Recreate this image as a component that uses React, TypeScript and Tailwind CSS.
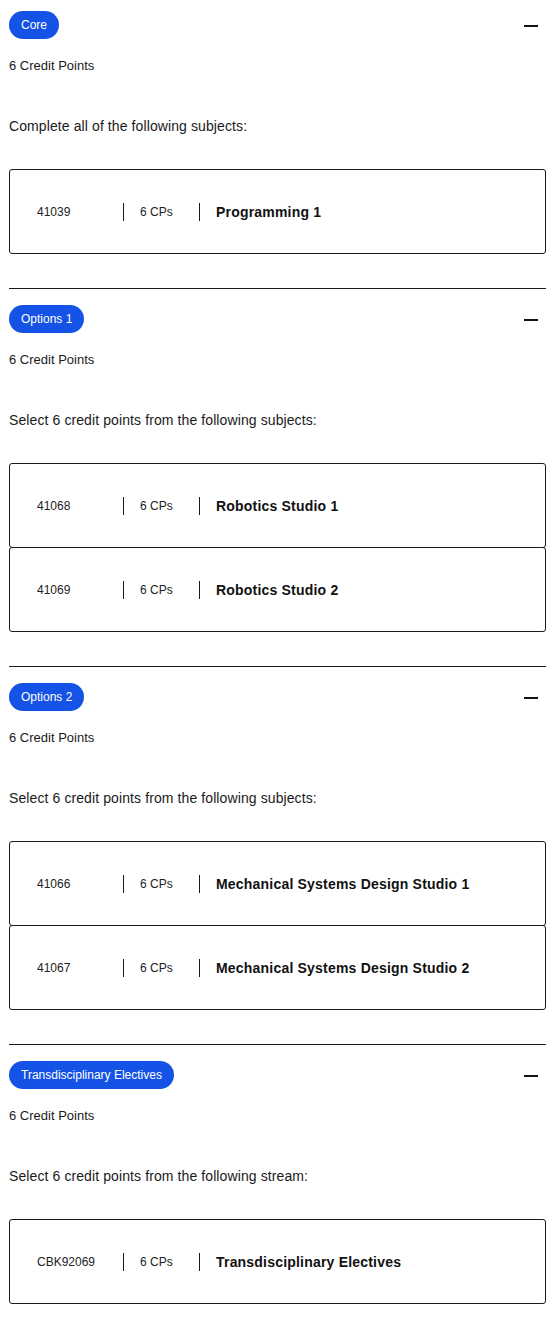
import React from 'react';

type Subject = { code: string; cps: string; name: string };
type Group = { label: string; credits: string; instruction: string; subjects: Subject[] };

const groups: Group[] = [
  {
    label: 'Core',
    credits: '6 Credit Points',
    instruction: 'Complete all of the following subjects:',
    subjects: [{ code: '41039', cps: '6 CPs', name: 'Programming 1' }],
  },
  {
    label: 'Options 1',
    credits: '6 Credit Points',
    instruction: 'Select 6 credit points from the following subjects:',
    subjects: [
      { code: '41068', cps: '6 CPs', name: 'Robotics Studio 1' },
      { code: '41069', cps: '6 CPs', name: 'Robotics Studio 2' },
    ],
  },
  {
    label: 'Options 2',
    credits: '6 Credit Points',
    instruction: 'Select 6 credit points from the following subjects:',
    subjects: [
      { code: '41066', cps: '6 CPs', name: 'Mechanical Systems Design Studio 1' },
      { code: '41067', cps: '6 CPs', name: 'Mechanical Systems Design Studio 2' },
    ],
  },
  {
    label: 'Transdisciplinary Electives',
    credits: '6 Credit Points',
    instruction: 'Select 6 credit points from the following stream:',
    subjects: [{ code: 'CBK92069', cps: '6 CPs', name: 'Transdisciplinary Electives' }],
  },
];

function SubjectRow({ s }: { s: Subject }) {
  return (
    <div className="flex items-center h-[85px] border border-[#1a1a1a] rounded-[3px] pl-[27px] -mt-px first:mt-0">
      <div className="w-[86px] text-[12px] text-[#222]">{s.code}</div>
      <div className="w-[76px] border-l border-[#1a1a1a] pl-4 text-[12px] leading-[18px] text-[#222]">{s.cps}</div>
      <div className="border-l border-[#1a1a1a] pl-4 text-[14px] leading-[18px] font-bold text-[#111] tracking-[0.2px]">
        {s.name}
      </div>
    </div>
  );
}

function Section({ g, last }: { g: Group; last: boolean }) {
  return (
    <div className={last ? '' : 'border-b border-[#1a1a1a] pb-[34px] mb-[16px]'}>
      {/* header */}
      <div className="flex items-center justify-between h-[28px]">
        <span className="inline-flex items-center h-[28px] px-3 rounded-full bg-[#1553e6] text-white text-[12px]">
          {g.label}
        </span>
        <span className="block w-[14px] h-[2px] bg-[#111] mr-[8px] mt-[2px]" />
      </div>
      <p className="text-[13px] leading-[18px] mt-[18px] text-[#1a1a1a]">{g.credits}</p>
      <p className="text-[14px] leading-[18px] mt-[42px] text-[#1a1a1a] tracking-[0.1px]">{g.instruction}</p>
      <div className="mt-[34px] flex flex-col">
        {g.subjects.map(s => (
          <SubjectRow key={s.code} s={s} />
        ))}
      </div>
    </div>
  );
}

export default function App() {
  return (
    <div
      className="bg-white min-h-[1320px] pl-[9px] pr-[13px] pt-[11px]"
      style={{ fontFamily: "Arial, 'Liberation Sans', sans-serif" }}
    >
      {groups.map((g, i) => (
        <Section key={g.label} g={g} last={i === groups.length - 1} />
      ))}
    </div>
  );
}
